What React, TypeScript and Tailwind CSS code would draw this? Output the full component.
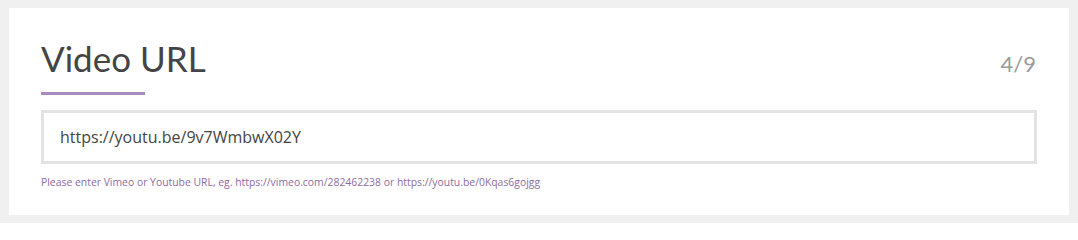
export default function App() {
  return (
    <div className="min-h-[223px] bg-[#f0f0f0] px-[9px] pt-[8px] pb-[8px]">
      <div className="h-[207px] bg-white pr-[32px] pl-[32px] pt-[26px]">
        <div className="flex items-start justify-between">
          <div>
            <h1 className="font-['Lato',sans-serif] text-[35px] leading-[48px] text-[#444444]">
              Video URL
            </h1>
            <div className="mt-[10px] h-[3px] w-[104px] bg-[#a98bbd]" />
          </div>
          <span className="mt-[16px] mr-[1px] font-['Lato',sans-serif] text-[22px] leading-[28px] text-[#9a9a9a]">
            4/9
          </span>
        </div>
        <input
          type="text"
          readOnly
          value="https://youtu.be/9v7WmbwX02Y"
          className="mt-[15px] block h-[54px] w-full border-[3px] border-[#e3e3e3] bg-white px-[16px] font-['Open_Sans',sans-serif] text-[16px] text-[#444444] outline-none"
        />
        <p className="mt-[11px] font-['Open_Sans',sans-serif] text-[10.4px] leading-[15px] text-[#8d6ca3]">
          Please enter Vimeo or Youtube URL, eg. https://vimeo.com/282462238 or https://youtu.be/0Kqas6gojgg
        </p>
      </div>
    </div>
  );
}
